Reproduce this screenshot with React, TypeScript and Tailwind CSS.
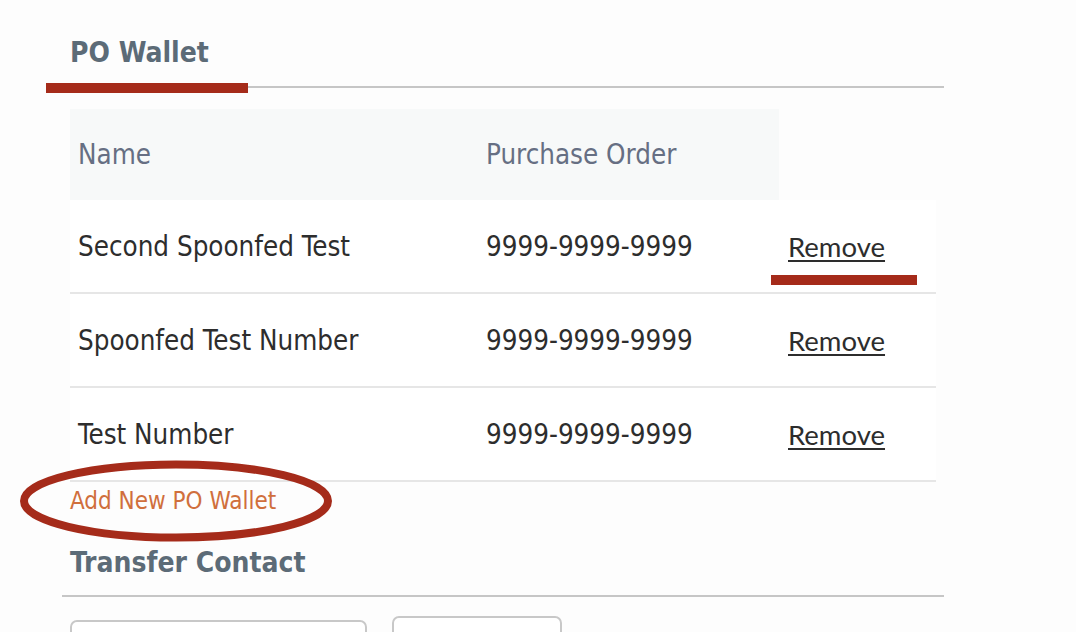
const rows = [
  { name: 'Second Spoonfed Test', po: '9999-9999-9999', marked: true },
  { name: 'Spoonfed Test Number', po: '9999-9999-9999', marked: false },
  { name: 'Test Number', po: '9999-9999-9999', marked: false },
];

const body = "font-['DejaVu_Sans_Condensed','DejaVu_Sans',sans-serif] font-stretch-condensed";

function Heading({ children }: { children: React.ReactNode }) {
  return (
    <h2 className={`${body} text-[28px] leading-[32px] font-bold text-[#5c6b77]`}>{children}</h2>
  );
}

export default function App() {
  return (
    <div className={`w-[1076px] h-[632px] overflow-hidden bg-[#fdfdfd] ${body}`}>
      {/* PO Wallet tab */}
      <div className="ml-[46px] w-[898px] pt-[37px]">
        <div className="pl-[24px]">
          <Heading>PO Wallet</Heading>
        </div>
        <div className="relative mt-[14px] h-[10px]">
          <div className="absolute left-0 right-0 top-[3px] h-[2px] bg-[#c6c6c6]" />
          <div className="absolute left-0 top-0 h-[10px] w-[202px] bg-[#a52b1a]" />
        </div>
      </div>

      {/* table */}
      <div className="ml-[70px] mt-[15px] w-[866px]">
        <div className="flex h-[92px] pt-[1px] text-[27.5px] text-[#666f83]">
          <div className="flex w-[408px] items-center bg-[#f7f9f9] pl-[8px]">Name</div>
          <div className="flex w-[301px] items-center bg-[#f7f9f9] pl-[8px]">Purchase Order</div>
        </div>
        {rows.map((r) => (
          <div
            key={r.name}
            className="relative flex h-[94px] border-b-2 border-[#e6e6e6] bg-white pt-[1px] text-[27.5px] text-[#2d2d2d]"
          >
            <div className="flex w-[408px] items-center pl-[8px]">{r.name}</div>
            <div className="flex w-[301px] items-center pl-[8px]">{r.po}</div>
            <div className="flex flex-1 items-center pl-[9px]">
              <a className="font-['Lato',sans-serif] text-[27.5px] text-[#2d2d2d] underline decoration-2 underline-offset-[3px]">
                Remove
              </a>
            </div>
            {r.marked && (
              <div className="absolute left-[701px] top-[75px] h-[10px] w-[146px] bg-[#a52b1a]" />
            )}
          </div>
        ))}
      </div>

      {/* add link, circled */}
      <div className="relative ml-[70px] mt-[7px] w-fit">
        <svg
          className="pointer-events-none absolute left-[-50px] top-[-29px]"
          width="312"
          height="82"
          viewBox="0 0 312 82"
        >
          <ellipse cx="156" cy="41" rx="152" ry="36.5" fill="none" stroke="#a52b1a" strokeWidth="8" />
        </svg>
        <a className="text-[24px] leading-[24px] text-[#d06f3c]">Add New PO Wallet</a>
      </div>

      {/* Transfer Contact */}
      <div className="ml-[62px] mt-[31px] w-[882px]">
        <div className="pl-[8px]">
          <Heading>Transfer Contact</Heading>
        </div>
        <div className="mt-[16px] h-[2px] bg-[#c6c6c6]" />
        <div className="mt-[19px] flex items-start pl-[8px]">
          <div className="mt-[4px] h-[44px] w-[297px] rounded-[7px] border-2 border-[#c8c8c8] bg-white" />
          <div className="ml-[25px] h-[44px] w-[170px] rounded-[7px] border-2 border-[#c8c8c8] bg-white" />
        </div>
      </div>
    </div>
  );
}
